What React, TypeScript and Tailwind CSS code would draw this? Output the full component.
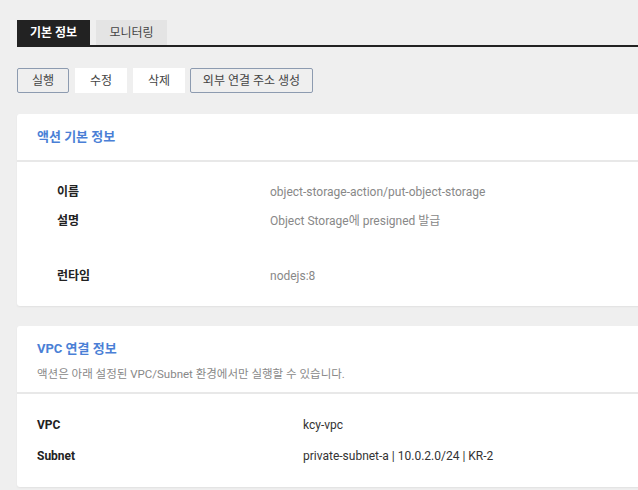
import React from "react";

const font = { fontFamily: "Roboto, 'Noto Sans CJK KR', sans-serif" };

const basicRows = [
  { label: "이름", value: "object-storage-action/put-object-storage", h: "h-[28px]" },
  { label: "설명", value: "Object Storage에 presigned 발급", h: "h-[56px] items-start pt-[6px]" },
  { label: "런타임", value: "nodejs:8", h: "h-[28px]" },
];

const vpcRows = [
  { label: "VPC", value: "kcy-vpc" },
  { label: "Subnet", value: "private-subnet-a | 10.0.2.0/24 | KR-2" },
];

export default function App() {
  return (
    <div className="w-[638px] h-[490px] overflow-hidden bg-[#efefef] pl-[17px] pt-[20px]" style={font}>
      {/* tabs */}
      <div className="flex items-end border-b-2 border-[#222] mr-[-20px]">
        <div className="h-[25px] w-[73px] bg-[#222] text-white text-[12px] font-bold flex items-center justify-center">
          기본 정보
        </div>
        <div className="ml-[6px] h-[25px] w-[71px] bg-[#e4e4e4] text-[#444] text-[12px] flex items-center justify-center">
          모니터링
        </div>
      </div>

      {/* actions */}
      <div className="flex gap-[6px] mt-[21px] text-[12px] text-[#444]">
        <button className="h-[25px] w-[52px] border border-[#8d9bb0] rounded-[2px] bg-[#efefef]">실행</button>
        <button className="h-[25px] w-[52px] bg-white">수정</button>
        <button className="h-[25px] w-[52px] bg-white">삭제</button>
        <button className="h-[25px] w-[123px] border border-[#8d9bb0] rounded-[2px] bg-[#efefef] ml-[-1px]">외부 연결 주소 생성</button>
      </div>

      {/* basic info card */}
      <div className="mt-[21px] mr-[-20px] bg-white rounded-[3px] shadow-[0_1px_2px_rgba(0,0,0,0.06)]">
        <div className="h-[48px] flex items-center pl-[20px] border-b-2 border-[#e8e8e8]">
          <h2 className="text-[13px] font-bold text-[#4a7fd6]">액션 기본 정보</h2>
        </div>
        <div className="pt-[16px] pb-[16px]">
          {basicRows.map((r) => (
            <div key={r.label} className={`flex items-center ${r.h} text-[12px]`}>
              <div className="w-[253px] pl-[40px] font-bold text-[#222]">{r.label}</div>
              <div className="text-[#888]">{r.value}</div>
            </div>
          ))}
        </div>
      </div>

      {/* vpc card */}
      <div className="mt-[20px] mr-[-20px] bg-white rounded-[3px] shadow-[0_1px_2px_rgba(0,0,0,0.06)]">
        <div className="h-[68px] pt-[14px] pl-[20px] border-b-2 border-[#e8e8e8]">
          <h2 className="text-[13px] font-bold text-[#4a7fd6] leading-[18px]">VPC 연결 정보</h2>
          <p className="text-[11.5px] text-[#888] mt-[9px] leading-[14px]">액션은 아래 설정된 VPC/Subnet 환경에서만 실행할 수 있습니다.</p>
        </div>
        <div className="pt-[15px] pb-[16px]">
          {vpcRows.map((r) => (
            <div key={r.label} className="flex items-center h-[31px] text-[12px]">
              <div className="w-[286px] pl-[20px] font-bold text-[#222]">{r.label}</div>
              <div className="text-[#333]">{r.value}</div>
            </div>
          ))}
        </div>
      </div>
    </div>
  );
}
